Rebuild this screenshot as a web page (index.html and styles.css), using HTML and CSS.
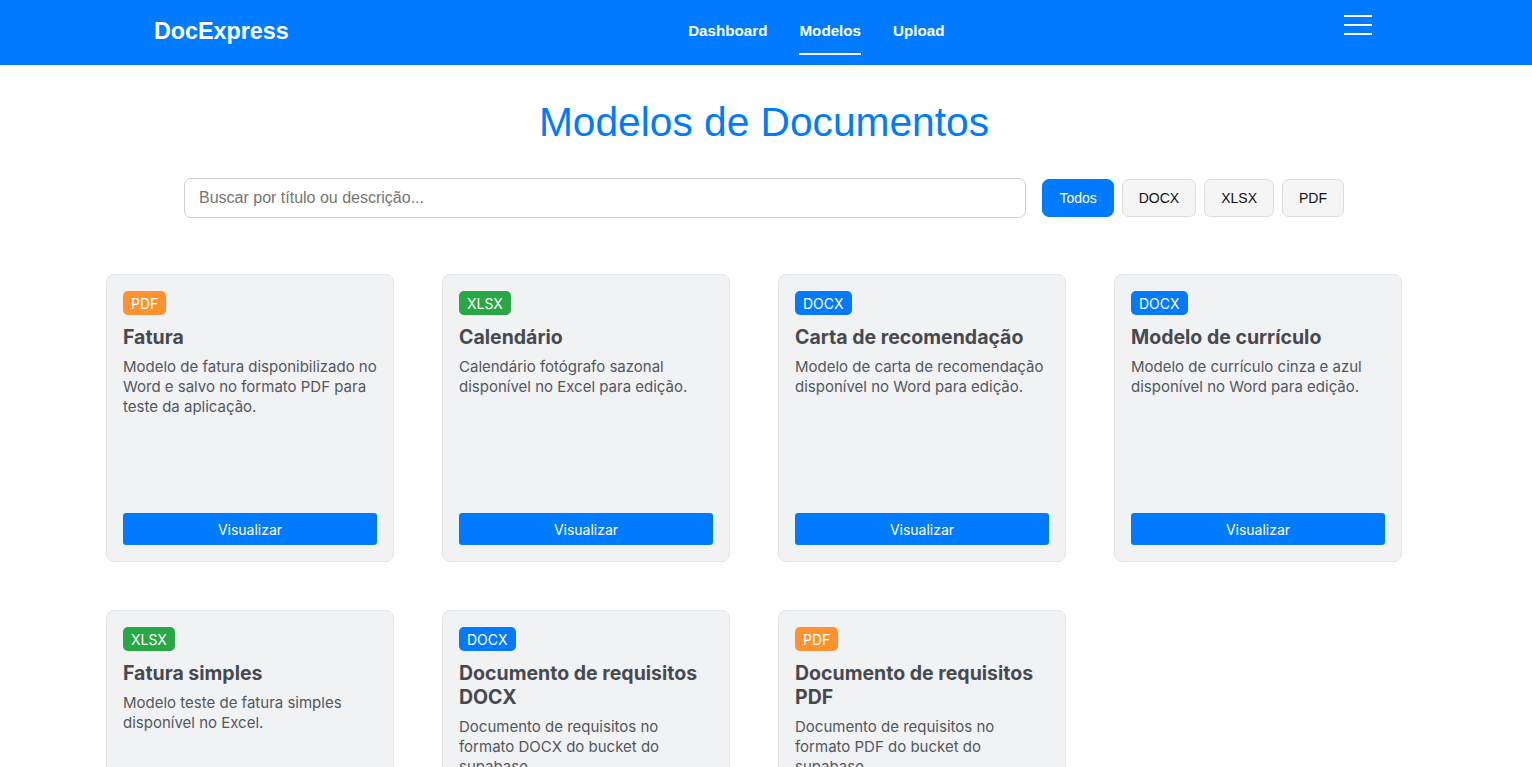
FILE: index.html
```html
<!DOCTYPE html>
<html lang="pt-BR">
<head>
<meta charset="utf-8">
<title>DocExpress - Modelos</title>
<link rel="stylesheet" href="styles.css">
</head>
<body>
<header class="navbar">
  <div class="brand">DocExpress</div>
  <nav class="nav-links">
    <a href="#" class="nav-link">Dashboard</a>
    <a href="#" class="nav-link active">Modelos</a>
    <a href="#" class="nav-link">Upload</a>
  </nav>
  <button class="menu-btn" aria-label="Menu">
    <span></span><span></span><span></span>
  </button>
</header>

<main class="page">
  <h1 class="page-title">Modelos de Documentos</h1>

  <div class="filters">
    <input class="search" type="text" placeholder="Buscar por título ou descrição...">
    <div class="filter-buttons">
      <button class="filter-btn active">Todos</button>
      <button class="filter-btn">DOCX</button>
      <button class="filter-btn">XLSX</button>
      <button class="filter-btn">PDF</button>
    </div>
  </div>

  <section class="grid">
    <article class="card">
      <span class="badge badge-pdf">PDF</span>
      <h2 class="card-title">Fatura</h2>
      <p class="card-desc">Modelo de fatura disponibilizado no Word e salvo no formato PDF para teste da aplicação.</p>
      <button class="view-btn">Visualizar</button>
    </article>
    <article class="card">
      <span class="badge badge-xlsx">XLSX</span>
      <h2 class="card-title">Calendário</h2>
      <p class="card-desc">Calendário fotógrafo sazonal disponível no Excel para edição.</p>
      <button class="view-btn">Visualizar</button>
    </article>
    <article class="card">
      <span class="badge badge-docx">DOCX</span>
      <h2 class="card-title">Carta de recomendação</h2>
      <p class="card-desc">Modelo de carta de recomendação disponível no Word para edição.</p>
      <button class="view-btn">Visualizar</button>
    </article>
    <article class="card">
      <span class="badge badge-docx">DOCX</span>
      <h2 class="card-title">Modelo de currículo</h2>
      <p class="card-desc">Modelo de currículo cinza e azul disponível no Word para edição.</p>
      <button class="view-btn">Visualizar</button>
    </article>
    <article class="card">
      <span class="badge badge-xlsx">XLSX</span>
      <h2 class="card-title">Fatura simples</h2>
      <p class="card-desc">Modelo teste de fatura simples disponível no Excel.</p>
      <button class="view-btn">Visualizar</button>
    </article>
    <article class="card">
      <span class="badge badge-docx">DOCX</span>
      <h2 class="card-title">Documento de requisitos DOCX</h2>
      <p class="card-desc">Documento de requisitos no formato DOCX do bucket do supabase.</p>
      <button class="view-btn">Visualizar</button>
    </article>
    <article class="card">
      <span class="badge badge-pdf">PDF</span>
      <h2 class="card-title">Documento de requisitos PDF</h2>
      <p class="card-desc">Documento de requisitos no formato PDF do bucket do supabase.</p>
      <button class="view-btn">Visualizar</button>
    </article>
  </section>
</main>
</body>
</html>
```

FILE: styles.css
```css
* { box-sizing: border-box; }

body {
  margin: 0;
  background: #ffffff;
  font-family: "Liberation Sans", Arial, sans-serif;
  color: #212529;
}

.navbar {
  height: 65px;
  background: #007bff;
  display: flex;
  align-items: center;
  justify-content: space-between;
  padding: 0 160px 0 154px;
}

.brand {
  color: #ffffff;
  font-weight: 700;
  font-size: 23.3px;
  line-height: 28px;
  margin-top: -4px;
}

.nav-links {
  display: flex;
  gap: 32px;
  margin-top: -4px;
}

.nav-link {
  position: relative;
  color: #ffffff;
  text-decoration: none;
  font-weight: 700;
  font-size: 15.2px;
  line-height: 20px;
}

.nav-link.active::after {
  content: "";
  position: absolute;
  left: 0;
  right: 0;
  top: 32px;
  height: 2px;
  background: #ffffff;
}

.menu-btn {
  width: 28px;
  height: 20px;
  padding: 0;
  border: 0;
  background: transparent;
  display: flex;
  flex-direction: column;
  justify-content: space-between;
  margin-top: -15px;
}

.menu-btn span {
  display: block;
  height: 2px;
  background: #ffffff;
}

.page {
  width: 1320px;
  margin: 0 auto;
}

.page-title {
  margin: 32px 0 31px;
  padding-right: 4px;
  text-align: center;
  color: #007bff;
  font-weight: 400;
  font-size: 40.7px;
  line-height: 50px;
}

.filters {
  width: 1160px;
  margin: 0 0 0 78px;
  display: flex;
  align-items: center;
  gap: 16px;
}

.search {
  flex: 1;
  height: 40px;
  border: 1px solid #cfcfcf;
  border-radius: 7px;
  padding: 0 14px;
  font-family: "Liberation Sans", Arial, sans-serif;
  font-size: 16px;
  color: #333;
  background: #fff;
}

.search::placeholder { color: #757575; }

.filter-buttons {
  display: flex;
  gap: 8px;
}

.filter-btn {
  height: 38px;
  padding: 0 16px;
  border: 1px solid #dddddd;
  border-radius: 7px;
  background: #f5f5f5;
  color: #111;
  font-family: "Liberation Sans", Arial, sans-serif;
  font-size: 14px;
}

.filter-btn.active {
  background: #007bff;
  border-color: #007bff;
  color: #ffffff;
}

.grid {
  margin-top: 56px;
  display: grid;
  grid-template-columns: repeat(4, 288px);
  gap: 48px;
}

.card {
  height: 288px;
  background: #f1f2f4;
  border: 1px solid #e3e5e8;
  border-radius: 8px;
  padding: 16px;
  display: flex;
  flex-direction: column;
  align-items: flex-start;
  font-family: Inter, "Noto Sans", sans-serif;
}

.badge {
  display: inline-block;
  height: 24px;
  padding: 0 8px;
  border-radius: 5px;
  color: #ffffff;
  font-size: 14px;
  line-height: 25px;
}

.badge-pdf { background: #fd9330; }
.badge-xlsx { background: #28a745; }
.badge-docx { background: #007bff; }

.card-title {
  margin: 10px 0 8px;
  font-size: 19.5px;
  line-height: 24px;
  font-weight: 700;
  color: #454a50;
}

.card-desc {
  margin: 0;
  font-size: 15px;
  line-height: 20px;
  color: #52575e;
}

.view-btn {
  margin-top: auto;
  width: 100%;
  height: 32px;
  border: 0;
  border-radius: 3px;
  background: #007bff;
  color: #ffffff;
  font-family: Inter, "Noto Sans", sans-serif;
  font-size: 14px;
}
```
